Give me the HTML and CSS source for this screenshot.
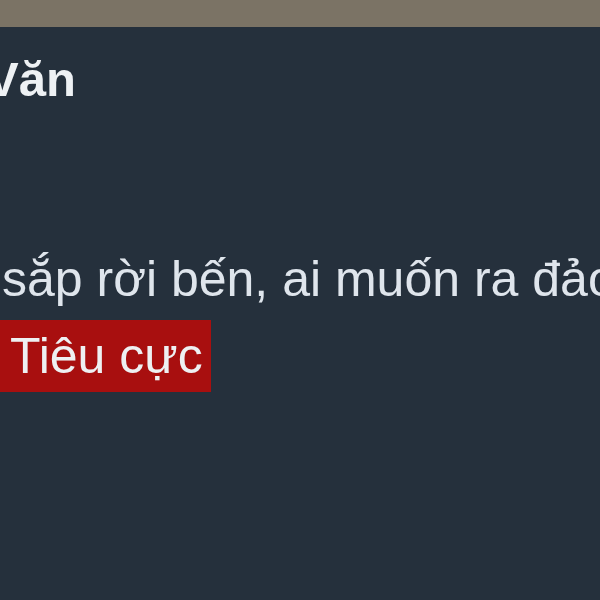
FILE: index.html
```html
<!DOCTYPE html>
<html lang="vi">
<head>
  <meta charset="utf-8">
  <title>Văn</title>
  <link rel="stylesheet" href="styles.css">
</head>
<body>
  <div class="topbar"></div>

  <div class="post">
    <h2 class="post-title">Văn</h2>
    <p class="post-text">sắp rời bến, ai muốn ra đảo thì nhanh lên</p>
    <div class="post-tags">
      <span class="tag tag-negative">Tiêu cực</span>
    </div>
  </div>
</body>
</html>
```

FILE: styles.css
```css
body {
  margin: 0;
  background-color: #25303c;
  font-family: "Liberation Sans", Arial, sans-serif;
  color: #dfe5ec;
  overflow: hidden;
}

.topbar {
  height: 27px;
  background-color: #7b7365;
}

.post {
  font-size: 50px;
  line-height: 60px;
}

.post-title {
  margin: 22px 0 0 -14px;
  font-size: 49px;
  font-weight: bold;
  color: #eef1f4;
}

.post-text {
  margin: 140px 0 0 2px;
  white-space: nowrap;
}

.post-tags {
  margin-top: 11px;
}

.tag {
  display: inline-block;
  padding: 6px 8px 6px 10px;
}

.tag-negative {
  background-color: #a80f0f;
  color: #eef0f2;
}
```
